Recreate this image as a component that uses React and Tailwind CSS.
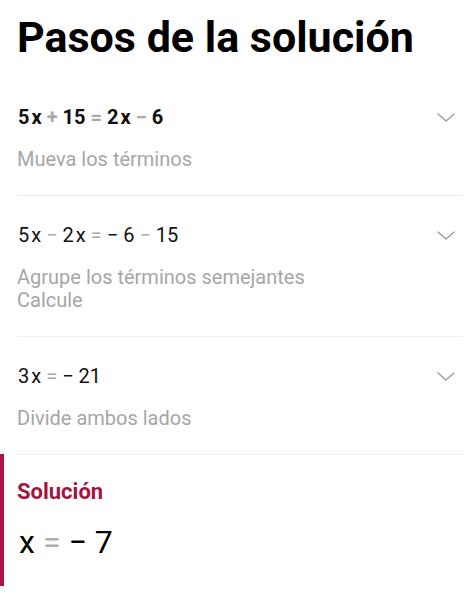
import React from "react";

const Op = ({ c }) => <span className="text-[#a9a9a9] mx-[5px]">{c}</span>;
const X = () => <span className="ml-[2px]">x</span>;

const Chevron = () => (
  <svg width="18" height="10" viewBox="0 0 18 10" className="mt-[2px]">
    <path d="M1 1 L9 8 L17 1" fill="none" stroke="#a0a0a0" strokeWidth="1.6" strokeLinecap="round" strokeLinejoin="round" />
  </svg>
);

function Step({ eq, bold, lines }) {
  return (
    <div className="pt-[27px] pb-[24px] border-b border-[#efefef]">
      <div className="flex items-center justify-between pr-[8px]">
        <div className={`pl-[1px] text-[20px] leading-[24px] text-[#111] ${bold ? "font-bold" : "font-normal"}`}>{eq}</div>
        <Chevron />
      </div>
      <div className="mt-[19px] text-[20px] leading-[23px] text-[#a6a6a6]">
        {lines.map((l) => (
          <div key={l}>{l}</div>
        ))}
      </div>
    </div>
  );
}

export default function App() {
  return (
    <div className="w-[474px] h-[610px] bg-white" style={{ fontFamily: "Roboto, 'Noto Sans', sans-serif" }}>
      <div className="pl-[17px] pt-[12px] pb-[16px]">
        <h1 className="text-[43px] leading-[50px] font-bold text-black">Pasos de la solución</h1>
      </div>
      <div className="pl-[17px] pr-[11px]">
        <Step
          bold
          eq={<>5<X /><Op c="+" />15<Op c="=" />2<X /><Op c="−" />6</>}
          lines={["Mueva los términos"]}
        />
        <Step
          eq={<>5<X /><Op c="−" />2<X /><Op c="=" />− 6<Op c="−" />15</>}
          lines={["Agrupe los términos semejantes", "Calcule"]}
        />
        <Step
          eq={<>3<X /><Op c="=" />− 21</>}
          lines={["Divide ambos lados"]}
        />
      </div>
      <div className="flex -mt-[1px]">
        <div className="w-[4px] h-[132px] bg-[#ac1340]" />
        <div className="pl-[13px] pt-[24px]">
          <div className="text-[22px] leading-[28px] font-bold text-[#a3153f]">Solución</div>
          <div className="mt-[16px] ml-[2px] text-[32px] leading-[40px] text-black">
            x<span className="text-[#b0b0b0] mx-[8px]">=</span>− 7
          </div>
        </div>
      </div>
    </div>
  );
}
